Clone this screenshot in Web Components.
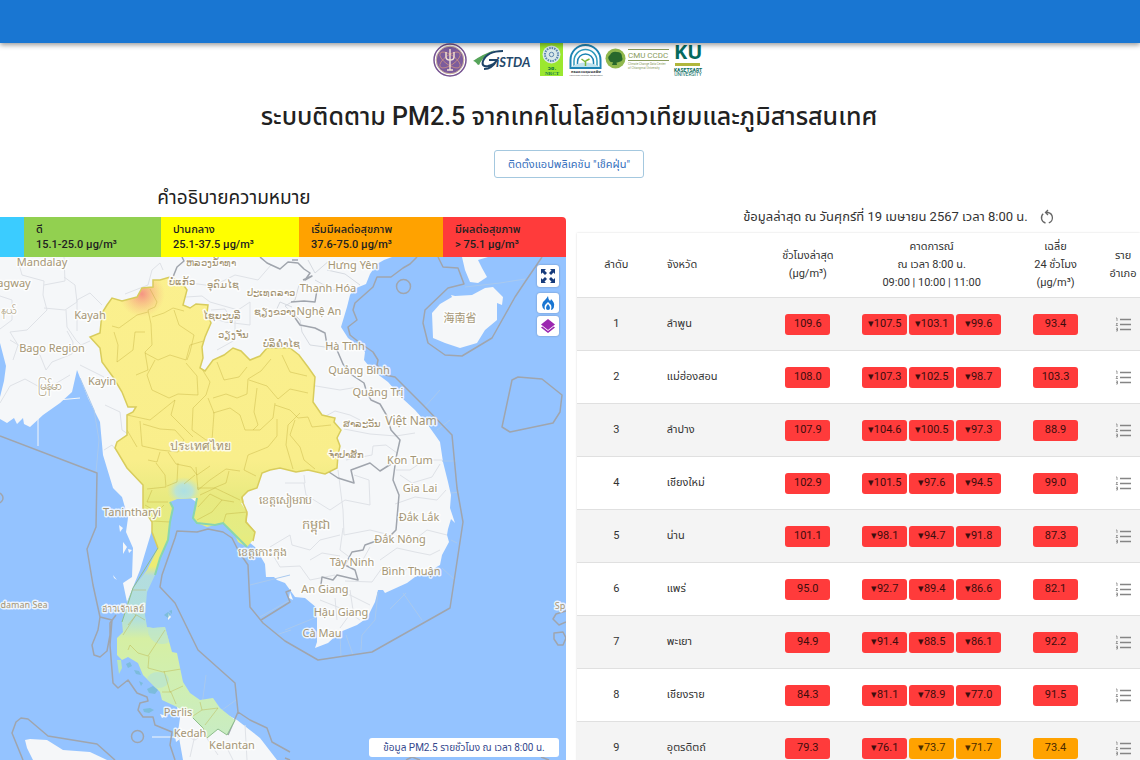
<!DOCTYPE html>
<html lang="th">
<head>
<meta charset="utf-8">
<meta name="viewport" content="width=device-width, initial-scale=1">
<title>ระบบติดตาม PM2.5</title>
<style>
  body { margin: 0; background: #fff; color: #212121; font-family: Roboto, "Noto Sans Thai", "Noto Sans", sans-serif; overflow-x: hidden; }
</style>
</head>
<body>
<pm-app></pm-app>
<script>
const define = (name, html, setup) => {
  const template = document.createElement('template');
  template.innerHTML = html;
  customElements.define(name, class extends HTMLElement {
    connectedCallback() {
      if (this.shadowRoot) return;
      this.attachShadow({ mode: 'open' }).append(template.content.cloneNode(true));
      if (setup) setup(this, this.shadowRoot);
    }
  });
};

define('app-bar', `
<style>
  :host { display: block; height: 43px; background: #1976d2; box-shadow: 0 2px 5px rgba(0,0,0,.4); position: relative; z-index: 2; }
</style>`);

define('partner-logos', `
<style>
  :host { display: flex; justify-content: center; height: 36px; padding-right: 4px; }
  svg { display: block; width: 272px; height: 36px; }
</style>
<svg viewBox="431 43 272 36" role="img" aria-label="หน่วยงานร่วม">
  <g>
    <circle cx="450" cy="60" r="16" fill="#fff" stroke="#765391" stroke-width="1.5"/>
    <circle cx="450" cy="60" r="13.8" fill="#7c5c9c" stroke="#d2b8a0" stroke-width="1"/>
    <g fill="none" stroke="#c98f83" stroke-width=".8"><ellipse cx="450" cy="60" rx="12" ry="5" transform="rotate(35 450 60)"/><ellipse cx="450" cy="60" rx="12" ry="5" transform="rotate(-35 450 60)"/></g>
    <path d="M450 49v21M446 52v5q0 3 4 3t4-3v-5M447 70h6" fill="none" stroke="#f5e5d5" stroke-width="1.4"/>
  </g>
  <g>
    <path d="M473 61q10-7 22-11-12 7-15 13 0 2-2 2-3-4-5-4Z" fill="#56a45a"/>
    <path d="M503 51q-16 0-20 10-2 6 5 5 6-1 9-6h-8M489 60h8q-5 9-13 9" fill="none" stroke="#1d4468" stroke-width="2"/>
    <text x="496" y="67" font-family="Lato" font-size="13" font-weight="700" font-style="italic" fill="#24486b">iSTDA</text>
  </g>
  <g>
    <path d="M540 43h23v33h-23z" fill="#9be830"/>
    <circle cx="551.500" cy="54.500" r="9" fill="#d9e9e9"/>
    <circle cx="551.500" cy="54.500" r="6.500" fill="none" stroke="#5b84ae" stroke-width="2" stroke-dasharray="1.500 1"/>
    <circle cx="551.500" cy="54.500" r="2.200" fill="none" stroke="#5b84ae"/>
    <text x="552" y="70" text-anchor="middle" font-size="6" font-weight="700" fill="#0a6d42">วช.</text>
    <text x="552" y="75" text-anchor="middle" font-family="Liberation Serif" font-size="5" font-weight="700" fill="#13784a">NRCT</text>
  </g>
  <g fill="none" stroke="#1d84b4">
    <path d="M570.500 68v-8a15 15 0 0 1 30 0v8z" stroke-width="2"/>
    <path d="M574 67v-6a11.500 11.500 0 0 1 23 0v6" stroke="#2e9abc" stroke-width="1.500"/>
    <path d="M577.500 66v-4a8 8 0 0 1 16 0v4" stroke-width="1.500"/>
    <path d="M571 67q14-9 29 0z" fill="#bfe2ee" stroke="none"/>
    <path d="M585.500 66v-5m0 1-4-3m4 2 4-2" stroke="#78b637" stroke-width="1.500"/>
    <text x="586" y="73" text-anchor="middle" font-size="4" font-weight="700" fill="#30343b" stroke="none">กรมควบคุมมลพิษ</text>
    <text x="586" y="76" text-anchor="middle" font-size="2" fill="#555" stroke="none">POLLUTION CONTROL DEPARTMENT</text>
  </g>
  <g>
    <circle cx="615.500" cy="58.500" r="10" fill="#90b84d"/>
    <path d="M609 60q-2-3 1-5 2-4 7-3 5 0 5 5 2 4-3 5-4 1-5 0-4 1-5-2zM614 60h2l1 5h-5z" fill="#28682c"/>
    <g fill="#899b5c"><path d="M628 49h41v1h-41zM628 60h41v1h-41z"/>
    <text x="628" y="58" font-size="8">CMU CCDC</text>
    <text x="628" y="65" font-size="3">Climate Change Data Center</text>
    <text x="628" y="69" font-size="3">of Chiangmai University</text></g>
  </g>
  <g fill="#05695d">
    <text x="674" y="59" font-family="Open Sans" font-size="20" font-weight="700">KU</text>
    <path d="M675 63h25v3h-25z" fill="#b0b63c"/>
    <text x="688" y="72" text-anchor="middle" font-size="5" font-weight="700">KASETSART</text>
    <text x="688" y="76" text-anchor="middle" font-size="5">UNIVERSITY</text>
  </g>
</svg>`);

define('legend-bar', `
<style>
  :host { display: block; }
  dl { margin: 0; display: grid; grid-template-columns: 24fr 137fr 138fr 144fr 123fr; height: 40px; border-radius: 0 4px 0 0; overflow: hidden; font-size: 11px; font-weight: 500; line-height: 15px; }
  div { padding: 5px 0 5px 12px; white-space: nowrap; box-sizing: border-box; }
  dt, dd { margin: 0; }
</style>
<dl>
  <div style="background:#3bccff"></div>
  <div style="background:#92d050"><dt>ดี</dt><dd>15.1-25.0 μg/m³</dd></div>
  <div style="background:#ffff00"><dt>ปานกลาง</dt><dd>25.1-37.5 μg/m³</dd></div>
  <div style="background:#ffa200"><dt>เริ่มมีผลต่อสุขภาพ</dt><dd>37.6-75.0 μg/m³</dd></div>
  <div style="background:#ff3b3b"><dt>มีผลต่อสุขภาพ</dt><dd>&gt; 75.1 μg/m³</dd></div>
</dl>`);

const THAILAND = 'M170 277 182 283 187 290 183 305 190 308 196 304 208 305 207 313 211 323 205 337 202 347 203 358 200 368 205 371 213 360 224 355 233 348 241 351 250 360 260 356 267 348 290 348 299 355 308 367 315 377 313 402 322 415 335 418 334 422 341 430 337 438 340 446 338 455 337 468 325 474 308 470 296 472 280 468 270 470 262 473 257 488 248 491 242 497 243 503 247 512 246 522 255 532 253 540 247 547 238 542 235 535 223 523 215 525 207 527 197 523 193 518 196 508 197 498 177 499 170 502 173 508 170 522 168 540 160 558 155 575 147 592 145 615 147 627 153 628 165 627 172 652 177 653 183 682 190 693 200 700 213 698 220 708 235 720 227 735 218 729 207 738 203 728 193 718 177 707 162 700 160 692 143 675 138 663 128 657 122 660 117 655 117 638 123 632 122 622 128 600 133 588 147 570 158 548 152 532 152 522 143 508 143 485 127 468 115 448 117 442 127 435 127 415 133 412 136 407 128 407 122 392 113 377 102 362 100 348 90 337 100 333 102 313 107 305 112 298 122 301 137 297 142 288 153 287 153 280 160 280Z';

define('province-map', `
<style>
  :host { display: block; position: relative; aspect-ratio: 566 / 503; overflow: hidden; background: #94c3ff; }
  svg.map { display: block; width: 100%; height: 100%; }
  .labels { font: 11px "Noto Sans", "Noto Sans CJK SC", sans-serif; fill: #a59675; stroke: #fff; stroke-width: 3px; stroke-opacity: .8; paint-order: stroke; stroke-linejoin: round; text-anchor: middle; }
  .tools { position: absolute; top: 8px; right: 7px; display: grid; gap: 3px; }
  .tools button { width: 22px; height: 20px; padding: 0; border: 0; border-radius: 3px; background: #fff; box-shadow: 0 0 2px rgba(0,0,0,.3); display: grid; place-items: center; }
  .tools button:first-child { height: 22px; margin-bottom: 3px; }
  .tools svg { width: 16px; height: 16px; display: block; }
  .caption { position: absolute; right: 7px; bottom: 3px; width: 190px; height: 19px; border: 0; border-radius: 3px; background: #fff; color: #34488d; font: inherit; font-size: 10px; line-height: 18px; padding: 0; white-space: nowrap; }
</style>
<svg class="map" viewBox="0 257 566 503" preserveAspectRatio="xMidYMin slice" role="img" aria-label="แผนที่ PM2.5">
  <defs>
    <linearGradient id="haze" gradientUnits="userSpaceOnUse" x1="0" y1="257" x2="0" y2="740">
      <stop offset="0" stop-color="#fbf08e"/><stop offset=".42" stop-color="#f9ee8b"/><stop offset=".5" stop-color="#e8ea80"/>
      <stop offset=".57" stop-color="#e4ec83"/><stop offset=".64" stop-color="#eeec72"/><stop offset=".66" stop-color="#b3dddf"/>
      <stop offset=".75" stop-color="#b2e0dc"/><stop offset=".79" stop-color="#d6efa3"/><stop offset=".88" stop-color="#d0efb1"/><stop offset="1" stop-color="#c8ecc4"/>
    </linearGradient>
    <radialGradient id="hot"><stop offset="0" stop-color="#f58a82" stop-opacity=".9"/><stop offset="1" stop-color="#f7b583" stop-opacity="0"/></radialGradient>
    <radialGradient id="cool"><stop offset="0" stop-color="#ade0e4"/><stop offset=".5" stop-color="#bce4d4"/><stop offset="1" stop-color="#cfe7b0" stop-opacity="0"/></radialGradient>
    <clipPath id="th"><path d="${THAILAND}"/></clipPath>
  </defs>
  <g fill="#f5f7f9">
    <path d="M0 257H392L384 260 377 264 370 274 366 284 354 289 350 295 347 307 341 327 348 338 357 345 365 352 364 360 372 370 388 382 402 398 415 410 428 425 440 442 443 462 448 482 451 495 450 508 455 523 451 519 448 529 447 535 449 542 442 555 440 565 428 572 415 577 407 583 385 593 383 590 378 590 375 602 367 618 357 625 340 632 328 643 315 648 317 642V608L305 598 295 597 285 583 277 580 274 577 266 577 265 564 255 547 240 535 180 490 155 520 140 570 127 602 123 583 132 577 133 548 126 532 128 518 122 497 113 488 103 455 100 422 88 398 77 370 72 392 60 403 43 415 30 427 24 424 23 418 17 424 14 418 7 423 0 419V397L4 381 6 366 0 343Z"/>
    <path d="M432 313 440 304 452 297 451 295 455 296 472 295 485 288 493 287 503 297 502 305 497 303V320L485 330 477 343 460 348 445 343 433 338ZM462 257 465 270 470 282 478 283 487 277 482 268 478 260 488 257ZM177 707 180 718 178 732 183 760H277L260 738 237 720 218 710ZM25 740 30 739 47 740 63 750 90 752 107 760H33L27 748ZM119 525l4 3-3 4zM123 542l4 5-4 7zM128 549l4 1-3 3zM113 575l4 5-3-2zM175 736l5 3-4 3zM160 714l6 2-4 2zM290 592l3 8-4-2zM168 613l3 4-3 3z"/>
    <path d="M38 411V446M58 400 80 398M152 737H176" stroke="#f5f7f9"/>
  </g>
  <g fill="none" stroke="#dfe2e7">
    <path d="M17 257 22 275 44 281 43 295 47 310 27 330 10 332 18 345 13 360M44 285 65 281 64 257M44 308 65 310 77 302 75 285 64 277M66 310 67 327 76 340 81 345 90 341M10 340 20 346 40 355 46 370 52 362 72 354 73 342 67 331M77 331 77 300 90 293 102 305M80 365 90 370 104 377M125 294 148 285 152 270 160 263 163 270M186 297 202 296 210 302 238 310 250 302M250 302 250 325 225 322 212 318M190 283 213 286 235 275 258 280 271 265 260 258M211 310 225 309 232 320 240 320M235 320 235 340 217 350M0 296 12 300 12 320 0 329M105 405 120 412 122 430 128 434M104 450 112 445 120 455M0 403 10 386 25 379 45 390 70 375M310 385 340 390 358 387 367 397M324 417 335 411 350 415 360 420M344 429 370 434 396 436 415 433M346 460 372 455 373 446 386 445 397 453M396 470 410 470 425 460 442 460M395 504 415 497 437 500 446 490M400 475 412 483 432 477 440 464M396 536 414 540 427 530 447 535M285 483 305 483 304 475M304 483 306 495 330 510 345 500 370 505 369 480 354 475M338 470 343 510 344 535 370 530 390 535M340 535 320 540 310 550 292 545 290 535 270 547M343 528 340 550 360 565 370 547M270 550 280 567 300 566 310 580 335 575M310 560 322 553 340 556M380 560 397 548 415 552 430 555 440 550M345 581 372 582 382 568 400 575 411 565M322 590 350 595 370 605M320 600 345 610 360 620M335 598 337 620M350 590 353 610 340 628M183 735 195 740 206 733M195 735 190 757M245 725 247 760M223 740 233 760M206 737 218 755"/>
    <path d="M299 285 295 300 285 306 300 320 302 332 310 345 325 347 340 350M315 280 333 290 353 285M327 270 345 274 360 285M308 260 315 273 330 260M257 313 274 315 280 302 292 307" stroke="#d7dbe1"/>
    <path d="M80 378 94 410 99 440 96 472M390 609 406 593M403 593 422 620M378 592 375 620 362 635 361 650M340 635 341 656M346 635 353 655M285 630 317 617M424 408 440 390M437 430 450 420M442 461H456M451 493 460 492M451 540 457 543M442 568 455 580M250 585 290 575M260 617 290 600M276 635 291 630M202 705 206 675M222 710 236 700M465 287 500 283 525 279" stroke="#a9c9ee"/>
  </g>
  <g fill="none" stroke="#a0a5ad" stroke-width="1.500" stroke-linejoin="round">
    <path d="M182 257 184 261 177 267 173 277 169 279M260 257 267 263 280 269 288 262 298 263 304 269 310 273 305 280 312 276 303 280M292 260 298 260M291 302 304 301 315 302 317 290M291 312 300 325 315 328 325 333 327 345 337 350 343 364 352 375 364 383 367 393 371 400 380 404 387 416 391 430 400 440 396 458 393 480 399 495 396 530 390 536 365 545 363 550 352 552 345 565 355 570 358 580 337 575 333 580 322 577 320 592M329 472 338 478 354 483 351 470 370 463 380 471 391 464"/>
    <path d="M417 257 410 264 403 268 391 277 377 277 373 287 355 303 353 310 357 320 348 327 350 335 360 343 373 352 378 360 377 365 385 375 395 377 423 405 452 435 457 488 463 522 455 575 450 608 372 652 318 660 285 641 263 623 250 607 248 565 239 552 232 538 223 532 208 529 197 532 177 531 175 538 162 575 160 587 175 603 198 650 235 683 238 712 228 735M238 712 250 720 267 728 272 742 290 752M0 436 97 473 96 527 87 549 93 585 100 617 112 620 110 645 113 683 118 688 128 680 137 693 147 697 148 701 140 703 138 710 143 717 153 717 155 725 172 732 170 745 175 760M100 617 98 630 92 645 94 655 100 657 107 651 110 635 110 623 116 615M23 760 12 733 16 722 21 718 28 719 48 736 97 744 115 760M261 620 290 602 286 592 291 590M438 257 443 267 458 268 464 284 448 288 425 310 423 323 428 343 445 355 462 356 492 338 515 297 525 282 542 257M512 380 518 377 542 379 562 395 560 412 553 423 510 432 502 427ZM406 760 412 757 420 760M285 758 290 760M541 757 549 760"/>
    <circle cx="403.500" cy="286.500" r="7"/><circle cx="137.500" cy="736.500" r="6"/><circle cx="-2" cy="498" r="5"/>
    <path d="M566 611 556 614 553 619 559 625 566 622M554 633 563 632 566 638 563 645 558 645 554 639Z"/>
  </g>
  <path d="${THAILAND}" fill="url(#haze)"/>
  <g clip-path="url(#th)">
    <ellipse cx="142" cy="294" rx="23" ry="23" fill="url(#hot)"/>
    <ellipse cx="184" cy="491" rx="17" ry="14" fill="url(#cool)"/>
    <ellipse cx="162" cy="630" rx="14" ry="14" fill="#bce5cf" opacity=".7"/>
    <ellipse cx="158" cy="680" rx="11" ry="8" fill="#b8e4d1" opacity=".7"/>
    <path d="M150 289 157 302 155 307 148 310 151 324 152 345 145 352 148 370 136 375M112 326 119 328 137 315 148 312M152 317 164 313 173 308 184 311M174 310 179 325 194 335 190 352 187 360M114 332 118 345 117 362 133 350 135 332 145 332M145 353 158 360 170 355 186 360 190 345 207 340M155 360 147 375 152 390 169 398 178 394 198 395 197 376 186 363M202 369 210 382 206 395 193 408 192 430 206 440 212 440 214 413 208 398M217 362 224 380 239 377 247 367M213 398 226 394 237 398 247 394 248 379 261 371 271 359M282 355 290 372 307 376M249 380 267 386 278 399 290 389 308 393M257 388 254 412 258 425 253 430M213 413 230 408 240 415 245 430 260 430 273 418 275 403M275 405 290 410 298 418 308 417 312 427 331 425M295 420 290 435 300 447 304 460 315 469M300 413 288 425 286 445 293 469M277 419 277 436 268 447 248 455 244 470 256 476M127 415 150 420 160 412 175 400 171 415 181 425 193 437M140 421 142 446 160 450 178 452 184 440 175 430 160 429 143 424M127 430 137 447M160 452 157 462 148 460M156 463 165 475 166 487 147 489M168 452 176 464 191 467 197 475 210 466M178 463 177 482 167 486M196 467 198 490 210 480 226 469 240 471M229 471 226 483 214 488 197 488M184 484 195 475M200 495 215 488 240 500M197 520 212 512 222 500 234 502M222 500 210 494 198 507M223 524 226 514 247 512M152 490 147 502 168 502M152 521 170 522M145 505 157 512 164 505M133 590 146 590M128 610 145 620M123 635 136 615 128 625M128 650 130 645 138 653 148 656 165 630M149 656 148 668 163 672 181 669M164 671 170 692 183 686M171 692 162 692M171 692 176 704M200 702 202 710 218 708M202 710 193 716M218 708 205 725" fill="none" stroke="#b7a332" stroke-opacity=".35"/>
  </g>
  <path d="M155 575 160 558 168 540 170 522 173 508 170 502M197 498 193 518 197 523 215 525 223 523 235 535 247 547" fill="none" stroke="#89d6ae" stroke-width="2"/>
  <path d="M158 548 152 532 152 522 143 508 143 485 127 468 115 448 117 442 127 435 127 415 133 412 136 407 128 407 122 392 113 377 102 362 100 348 90 337 100 333 102 313 107 305 112 298 122 301 137 297 142 288 153 287 153 280 160 280 170 277 182 283 187 290 183 305 190 308 196 304 208 305 207 313 211 323 205 337 202 347 203 358 200 368 205 371 213 360 224 355 233 348 241 351 250 360 260 356 267 348 290 348 299 355 308 367 315 377 313 402 322 415 335 418 334 422 341 430 337 438 340 446 338 455 337 468 325 474 308 470 296 472 280 468 270 470 262 473 257 488 248 491 242 497 243 503 247 512 246 522 255 532" fill="none" stroke="#d8cc5c" stroke-width="1.500"/>
  <path d="M158 548 133 588 122 622M193 718 203 728 207 738 218 729 227 735 235 720" fill="none" stroke="#8ebe8c"/>
  <path d="M241 503 248 514 247 521 255 532 255 545 264 545 262 500Z" fill="#f5f7f9"/>
  <path d="M242 497 243 503 247 512 246 522 255 532 253 541" fill="none" stroke="#d8cc5c" stroke-width="1.500"/>
  <g fill="#6cb8c4" opacity=".6"><path d="M164 615l4-3 3 2-3 4zM169 611l3-1v4zM147 689l6-3 5 4-3 4-6-1zM143 709l7-1 4 2-5 3-5-1zM139 681l4 2-2 3zM134 670l5 1 2 4-5-1zM126 664l4-2 2 4-4 2z"/></g>
  <path d="M117 660h4l1 8-3 6z" fill="#bce8b6"/>
  <g class="labels">
    <text x="42" y="266">Mandalay</text><text x="14" y="287">agway</text><text x="90" y="319">Kayah</text>
    <text x="52" y="352">Bago Region</text><text x="102" y="385">Kayin</text><text x="49" y="390" font-size="12">မြန်မာ</text><text x="9" y="314">နယ်</text>
    <text x="132" y="516">Tanintharyi</text><text x="353" y="269">Hưng Yên</text><text x="328" y="292">Thanh Hóa</text>
    <text x="319" y="315">Nghệ An</text><text x="345" y="350">Hà Tĩnh</text><text x="359" y="374">Quảng Bình</text>
    <text x="378" y="396">Quảng Trị</text><text x="411" y="425" font-size="12">Việt Nam</text><text x="410" y="464">Kon Tum</text>
    <text x="420" y="492">Gia Lai</text><text x="419" y="521">Đắk Lắk</text><text x="400" y="543">Đắk Nông</text>
    <text x="352" y="566">Tây Ninh</text><text x="411" y="575">Bình Thuận</text><text x="325" y="593">An Giang</text>
    <text x="341" y="616">Hậu Giang</text><text x="322" y="637">Cà Mau</text><text x="178" y="716">Perlis</text>
    <text x="190" y="737">Kedah</text><text x="232" y="749">Kelantan</text>
    <text x="460" y="322">海南省</text><text x="200" y="450" font-size="12">ประเทศไทย</text>
    <g font-size="10"><text x="211" y="266">ຫລວງນ້ຳທາ</text><text x="182" y="285">ບໍ່ແກ້ວ</text><text x="223" y="288">ອຸດົມໄຊ</text>
    <text x="271" y="296">ປະເທດລາວ</text><text x="275" y="315">ຊຽງຂວາງ</text><text x="222" y="319">ໄຊຍະບູລີ</text><text x="233" y="338">ວຽງຈັນ</text>
    <text x="281" y="347">ບໍລິຄຳໄຊ</text><text x="362" y="427">ສາລະວັນ</text><text x="346" y="458">ຈຳປາສັກ</text></g>
    <text x="285" y="504">ខេត្តសៀមរាប</text><text x="316" y="529" font-size="13">កម្ពុជា</text><text x="262" y="556">ខេត្តកោះកុង</text>
    <g font-size="9"><text x="123" y="612">อ่าวเจ้าเลย์</text><text x="24" y="608">daman Sea</text><text x="560" y="609">Sp</text></g>
  </g>
</svg>
<div class="tools">
  <button aria-label="เต็มจอ"><svg viewBox="0 0 16 16" fill="#173c7c"><path d="M1 1h5L4.500 2.500 7 5 5 7 2.500 4.500 1 6zM15 1v5l-1.500-1.500L11 7 9 5l2.500-2.500L10 1zM1 15v-5l1.500 1.500L5 9l2 2-2.500 2.500L6 15zM15 15h-5l1.500-1.500L9 11l2-2 2.500 2.500L15 10z"/></svg></button>
  <button aria-label="จุดความร้อน"><svg viewBox="0 0 16 16" fill="#1976d2"><path d="M8 1q0 3 2 5 1-1 1-2 4 4 3 7 0 3-3 4 1-3 0-5L8 7l-3 3q-1 2 0 5-3-2-3-5 0-3 3-5 2-2 3-4z"/><path d="M8 9q2 2 2 4a2 2 0 0 1-4 0q0-2 2-4z"/></svg></button>
  <button aria-label="ชั้นข้อมูล"><svg viewBox="0 0 16 16" fill="#9c27b0"><path d="m8 1 7 5.500L8 12 1 6.500z"/><path d="m2.300 8.500-1.300 1L8 15l7-5.500-1.300-1L8 13z"/></svg></button>
</div>
<button class="caption">ข้อมูล PM2.5 รายชั่วโมง ณ เวลา 8:00 น.</button>`);

define('pm-chip', `
<style>
  :host { display: inline-block; width: 45px; height: 21px; line-height: 20px; border-radius: 3px; background: #ff3b3b; color: #3d0d0d; font-size: 11px; text-align: center; white-space: nowrap; }
  :host([level="warn"]) { background: #ffa200; color: #4a2b00; }
</style><slot></slot>`);

define('update-status', `
<style>
  :host { display: flex; align-items: center; justify-content: center; gap: 12px; height: 32px; padding-left: 80px; font-size: 13px; color: #333; white-space: nowrap; }
  button { border: 0; background: none; padding: 0; width: 14px; height: 16px; }
  svg { display: block; width: 14px; height: 16px; }
</style>
<span>ข้อมูลล่าสุด ณ วันศุกร์ที่ 19 เมษายน 2567 เวลา 8:00 น.</span>
<button aria-label="รีเฟรช"><svg viewBox="0 0 14 16" fill="none" stroke="#666" stroke-width="1.300"><path d="M5.500 3.500h2.500a5.400 5.400 0 0 1 .8 10.400M5.500 14A5.400 5.400 0 0 1 3.200 4.800M8 1 5.500 3.500 8 6"/></svg></button>`);

const ROWS = [
  ['ลำพูน', '109.6', '107.5', '103.1', '99.6', '93.4'],
  ['แม่ฮ่องสอน', '108.0', '107.3', '102.5', '98.7', '103.3'],
  ['ลำปาง', '107.9', '104.6', '100.5', '97.3', '88.9'],
  ['เชียงใหม่', '102.9', '101.5', '97.6', '94.5', '99.0'],
  ['น่าน', '101.1', '98.1', '94.7', '91.8', '87.3'],
  ['แพร่', '95.0', '92.7', '89.4', '86.6', '82.1'],
  ['พะเยา', '94.9', '91.4', '88.5', '86.1', '92.2'],
  ['เชียงราย', '84.3', '81.1', '78.9', '77.0', '91.5'],
  ['อุตรดิตถ์', '79.3', '76.1', '73.7', '71.7', '73.4']
];
const chip = (value, mark = '') => `<pm-chip${parseFloat(value) <= 75 ? ' level="warn"' : ''}>${mark}${value}</pm-chip>`;

define('province-table', `
<style>
  :host { display: block; box-shadow: 0 0 2px rgba(0,0,0,.15); }
  table { width: 100%; table-layout: fixed; border-collapse: separate; border-spacing: 0; font-size: 11px; color: #333; }
  th, td { box-sizing: border-box; padding: 0; text-align: center; border-bottom: 1px solid #e0e0e0; white-space: nowrap; }
  th { height: 65px; font-weight: 400; line-height: 18px; }
  td { height: 53px; line-height: 18px; }
  th:nth-child(2), td:nth-child(2) { text-align: left; padding-left: 11px; }
  tbody tr:nth-child(odd) { background: #f4f4f4; }
  .forecast { display: flex; justify-content: center; gap: 2px; }
  pm-chip { vertical-align: middle; }
  button { border: 0; background: none; padding: 0; width: 16px; height: 16px; vertical-align: middle; }
  svg { display: block; width: 16px; height: 16px; }
</style>
<table>
  <colgroup><col style="width:14%"><col style="width:18%"><col style="width:18%"><col style="width:26%"><col style="width:18%"><col style="width:6%"></colgroup>
  <thead><tr><th>ลำดับ</th><th>จังหวัด</th><th>ชั่วโมงล่าสุด<br>(μg/m³)</th><th>คาดการณ์<br>ณ เวลา 8:00 น.<br>09:00 | 10:00 | 11:00</th><th>เฉลี่ย<br>24 ชั่วโมง<br>(μg/m³)</th><th>ราย<br>อำเภอ</th></tr></thead>
  <tbody>${ROWS.map((r, i) => `<tr><td>${i + 1}</td><td>${r[0]}</td><td>${chip(r[1])}</td><td><div class="forecast">${chip(r[2], '▾')}${chip(r[3], '▾')}${chip(r[4], '▾')}</div></td><td>${chip(r[5])}</td><td><button aria-label="รายอำเภอ ${r[0]}"><svg viewBox="0 0 16 16" fill="none" stroke="#858585"><path d="M5 3.500h11M5 8.500h11M5 13.500h11" stroke-width="1.500"/><path d="M1 2h1v3M1 7.500h1.500L1 9.500h2M1 12h1.500v3H1M1 13.500h1.500" stroke-width=".8"/></svg></button></td></tr>`).join('')}</tbody>
</table>`);

define('pm-app', `
<style>
  :host { display: block; }
  header { display: flex; flex-direction: column; align-items: center; padding-right: 2px; }
  h1 { margin: 20px 0 0; font-size: 25px; line-height: 36px; font-weight: 500; white-space: nowrap; }
  .install { margin-top: 15px; width: 150px; height: 28px; box-sizing: border-box; border: 1px solid #a4c8df; border-radius: 3px; background: #fff; color: #3670bd; font: inherit; font-size: 11px; padding: 0; white-space: nowrap; }
  main { display: grid; grid-template-columns: 566fr 563fr; gap: 11px; align-items: start; margin-top: 6px; }
  h2 { margin: 0; height: 33px; line-height: 28px; padding-right: 98px; text-align: center; font-size: 19px; font-weight: 400; white-space: nowrap; }
  section { min-width: 0; }
  update-status { padding-top: 17px; }
</style>
<app-bar></app-bar>
<header>
  <partner-logos></partner-logos>
  <h1>ระบบติดตาม PM2.5 จากเทคโนโลยีดาวเทียมและภูมิสารสนเทศ</h1>
  <button class="install">ติดตั้งแอปพลิเคชัน "เช็คฝุ่น"</button>
</header>
<main>
  <section><h2>คำอธิบายความหมาย</h2><legend-bar></legend-bar><province-map></province-map></section>
  <section><update-status></update-status><province-table></province-table></section>
</main>`);
</script>
</body>
</html>
